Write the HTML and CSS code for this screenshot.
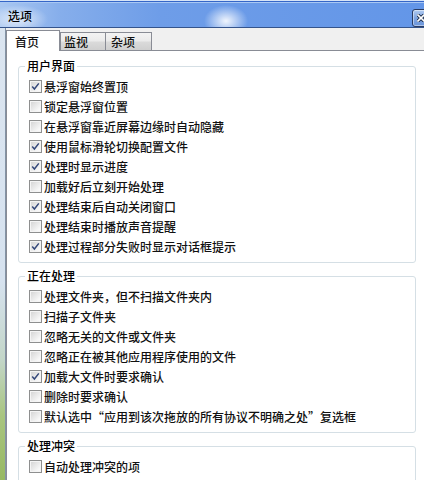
FILE: index.html
```html
<!DOCTYPE html>
<html lang="zh-CN">
<head>
    <meta charset="UTF-8">
    <title>选项</title>
    <link rel="stylesheet" href="styles.css">
</head>
<body>
    <div class="window">
        <div class="titlebar">
            <span class="title">选项</span>
            <div class="close">
                <svg width="8" height="8" viewBox="0 0 8 8">
                    <path d="M1 1 L7 7 M7 1 L1 7" stroke="#1d2d4a" stroke-width="3.4" stroke-linecap="square"/>
                    <path d="M1 1 L7 7 M7 1 L1 7" stroke="#fff" stroke-width="1.6" stroke-linecap="square"/>
                </svg>
            </div>
        </div>

        <div class="main">
            <div class="frame"></div>
            <div class="client">
                <div class="tabs">
                    <div class="tab active">首页</div>
                    <div class="tab tab-2">监视</div>
                    <div class="tab tab-3">杂项</div>
                </div>

                <div class="page">
                    <fieldset class="group">
                        <legend>用户界面</legend>
                        <label class="check on"><span class="box"></span>悬浮窗始终置顶</label>
                        <label class="check"><span class="box"></span>锁定悬浮窗位置</label>
                        <label class="check"><span class="box"></span>在悬浮窗靠近屏幕边缘时自动隐藏</label>
                        <label class="check on"><span class="box"></span>使用鼠标滑轮切换配置文件</label>
                        <label class="check on"><span class="box"></span>处理时显示进度</label>
                        <label class="check"><span class="box"></span>加载好后立刻开始处理</label>
                        <label class="check on"><span class="box"></span>处理结束后自动关闭窗口</label>
                        <label class="check"><span class="box"></span>处理结束时播放声音提醒</label>
                        <label class="check on"><span class="box"></span>处理过程部分失败时显示对话框提示</label>
                    </fieldset>

                    <fieldset class="group">
                        <legend>正在处理</legend>
                        <label class="check"><span class="box"></span>处理文件夹，但不扫描文件夹内</label>
                        <label class="check"><span class="box"></span>扫描子文件夹</label>
                        <label class="check"><span class="box"></span>忽略无关的文件或文件夹</label>
                        <label class="check"><span class="box"></span>忽略正在被其他应用程序使用的文件</label>
                        <label class="check on"><span class="box"></span>加载大文件时要求确认</label>
                        <label class="check"><span class="box"></span>删除时要求确认</label>
                        <label class="check"><span class="box"></span>默认选中“应用到该次拖放的所有协议不明确之处”复选框</label>
                    </fieldset>

                    <fieldset class="group">
                        <legend>处理冲突</legend>
                        <label class="check"><span class="box"></span>自动处理冲突的项</label>
                    </fieldset>
                </div>
            </div>
        </div>
    </div>

    <script>
        // tick marks for checked boxes
        document.querySelectorAll('.check.on .box').forEach(function (box) {
            box.innerHTML = '<svg width="11" height="11" viewBox="0 0 11 11"><path d="M2.2 5.6 L4.4 8 L8.8 2.4" fill="none" stroke="#34487a" stroke-width="1.5"/></svg>';
        });
    </script>
</body>
</html>
```

FILE: styles.css
```css
* {
    box-sizing: border-box;
}

body {
    margin: 0;
    width: 424px;
    height: 480px;
    overflow: hidden;
    font-family: "Noto Sans CJK SC", "Noto Sans", sans-serif;
    font-size: 12px;
    font-weight: 500;
    color: #111;
    background-color: #f0f0f0;
}

.window {
    display: flex;
    flex-direction: column;
    height: 480px;
}

.titlebar {
    height: 30px;
    display: flex;
    align-items: center;
    padding-left: 8px;
    border-top: 1px solid #d6e4f7;
    border-bottom: 1px solid #34548c;
    box-shadow: inset 0 1px 0 #3566c8, inset 0 2px 0 #a9c8f3;
    background:
        radial-gradient(ellipse 30px 14px at 18px 18px, rgba(255, 255, 255, 0.7), rgba(255, 255, 255, 0) 100%),
        radial-gradient(ellipse 22px 16px at 226px 20px, rgba(255, 255, 255, 0.9), rgba(255, 255, 255, 0) 100%),
        linear-gradient(to right, #a9c7f1 0, #86aeeb 60px, #6e9de8 160px, #6396e8 100%);
}

.title {
    flex: 1;
    padding-top: 3px;
    color: #000;
}

.close {
    align-self: flex-start;
    margin-top: 8px;
    margin-right: -9px;
    width: 21px;
    height: 18px;
    border: 1px solid #2a3c63;
    border-radius: 3px;
    background: linear-gradient(to bottom, #b2cbf0, #7ea4e0 50%, #6b95da);
    box-shadow: inset 0 0 0 1px rgba(255, 255, 255, 0.45);
    padding: 4px 0 0 4px;
}

.close svg {
    display: block;
}

.main {
    flex: 1;
    display: flex;
}

.frame {
    width: 6px;
    background: linear-gradient(to bottom, #dbe5f0 0%, #d6e2ef 55%, #c3d6c8 72%, #a9c580 84%, #94b65e 100%);
    box-shadow: inset -1px 0 0 #8393a5;
}

.client {
    flex: 1;
    display: flex;
    flex-direction: column;
}

.tabs {
    height: 23px;
    display: flex;
    align-items: flex-end;
    border-bottom: 1px solid #898c95;
}

.tab {
    height: 18px;
    border: 1px solid #898c95;
    border-bottom: none;
    line-height: 16px;
    padding-top: 1px;
    background: linear-gradient(to bottom, #f3f3f3 0, #ebebeb 45%, #dadada 55%, #cfcfcf 100%);
}

.tab.active {
    position: relative;
    z-index: 1;
    height: 21px;
    width: 54px;
    margin-bottom: -1px;
    padding: 1px 0 0 8px;
    line-height: 19px;
    background: #fff;
}

.tab-2 {
    width: 46px;
    padding-left: 3px;
}

.tab-3 {
    width: 47px;
    padding-left: 5px;
    margin-left: -1px;
}

.page {
    flex: 1;
    background-color: #fff;
    border-left: 1px solid #898c95;
    padding: 8px 8px 0 11px;
}

.group {
    margin: 0 0 6px;
    border: 1px solid #d5dfe5;
    border-radius: 3px;
    padding: 3px 6px 6px 10px;
    min-width: 0;
}

.group legend {
    padding: 0 2px;
    margin-left: -4px;
    line-height: 14px;
    height: 14px;
    color: #000;
}

.check {
    display: flex;
    align-items: center;
    height: 20px;
    white-space: nowrap;
}

.box {
    width: 13px;
    height: 13px;
    margin-right: 2px;
    flex: none;
    border: 1px solid #8e8f8f;
    background: linear-gradient(135deg, #d2d2d2, #f6f6f6 75%, #fcfcfc);
    box-shadow: inset 0 0 0 1px #f4f4f4;
}

.box svg {
    display: block;
}
```
